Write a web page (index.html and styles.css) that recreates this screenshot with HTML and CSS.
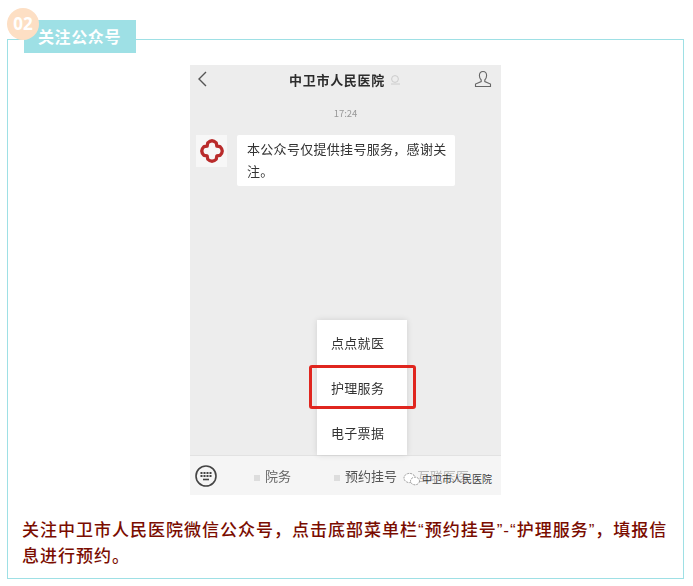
FILE: index.html
```html
<!DOCTYPE html>
<html lang="zh-CN">
<head>
    <meta charset="UTF-8">
    <meta name="viewport" content="width=device-width, initial-scale=1.0">
    <title>关注公众号</title>
    <link rel="stylesheet" href="styles.css">
</head>
<body>
    <div class="step">
        <div class="step-num">02</div>
        <div class="step-tag">关注公众号</div>
        <div class="step-box">
            <div class="phone">
                <div class="phone-top">
                    <svg class="back" width="12" height="18" viewBox="0 0 12 18"><path d="M10 2 L3 9 L10 16" fill="none" stroke="#555" stroke-width="1.4"/></svg>
                    <div class="phone-title">中卫市人民医院
                        <svg width="11" height="11" viewBox="0 0 11 11"><circle cx="5" cy="5" r="3.4" fill="none" stroke="#ccc"/><path d="M1 10h9" stroke="#ccc"/></svg>
                    </div>
                    <svg class="user" width="18" height="18" viewBox="0 0 18 18"><path d="M9 1.5c-2.4 0-3.6 1.8-3.6 4 0 2 .8 3.500 1.800 4.500v1.600L1.500 14v2.500h15V14l-5.700-2.400V10c1-1 1.800-2.500 1.800-4.500 0-2.200-1.200-4-3.600-4z" fill="none" stroke="#666" stroke-width="1.100"/></svg>
                </div>
                <div class="phone-time">17:24</div>
                <div class="msg">
                    <div class="avatar">
                        <svg width="28" height="28" viewBox="0 0 26 26"><path d="M9 5.500Q13 1.500 17 5.500L17.500 8.500L20.500 9Q24.500 13 20.500 17L17.500 17.500L17 20.500Q13 24.500 9 20.500L8.500 17.500L5.500 17Q1.500 13 5.500 9L8.500 8.500Z" fill="none" stroke="#b92b2b" stroke-width="3" stroke-linejoin="round"/></svg>
                    </div>
                    <div class="bubble">本公众号仅提供挂号服务，感谢关注。</div>
                </div>
                <div class="phone-space"></div>
                <div class="phone-bar">
                    <svg class="keys" width="24" height="24" viewBox="0 0 24 24"><circle cx="12" cy="12" r="10" fill="none" stroke="#444" stroke-width="1.600"/><path d="M6.500 9h11M6.500 12h11" stroke="#444" stroke-width="2" stroke-dasharray="2 1"/><path d="M9 15.500h6" stroke="#444" stroke-width="1.600"/></svg>
                    <div class="bar-item bar-first"><i></i>院务</div>
                    <div class="bar-item bar-second"><i></i>预约挂号</div>
                    <div class="bar-item bar-third">互联医医</div>
                </div>
                <div class="popup">
                    <div class="popup-item">点点就医</div>
                    <div class="popup-item">护理服务</div>
                    <div class="popup-item">电子票据</div>
                </div>
                <div class="popup-mark"></div>
            </div>
            <div class="mark">
                <svg width="18" height="14" viewBox="0 0 18 14"><ellipse cx="6.500" cy="6" rx="5.500" ry="4.600" fill="#fff" stroke="#999" stroke-dasharray="2 1"/><ellipse cx="12" cy="9" rx="4.500" ry="3.800" fill="#fff" stroke="#999" stroke-dasharray="2 1"/></svg>
                <span>中卫市人民医院</span>
            </div>
            <p class="step-text">关注中卫市人民医院微信公众号，点击底部菜单栏“预约挂号”-“护理服务”，填报信息进行预约。</p>
        </div>
    </div>
</body>
</html>
```

FILE: styles.css
```css
body {
    margin: 0;
    background: #fff;
    font-family: "Noto Sans CJK SC", "Liberation Sans", sans-serif;
    color: #333;
}
.step {
    position: relative;
    width: 677px;
    margin: 39px 0 0 7px;
}
.step-num {
    position: absolute;
    left: 0;
    top: -31px;
    z-index: 2;
    width: 32px;
    height: 32px;
    border-radius: 50%;
    background: #fddfc4;
    color: #fff;
    font-family: "Open Sans", sans-serif;
    font-size: 17px;
    font-weight: 700;
    line-height: 32px;
    text-align: center;
}
.step-tag {
    position: absolute;
    left: 17px;
    top: -19px;
    width: 112px;
    height: 33px;
    box-sizing: border-box;
    padding-left: 14px;
    background: #9ee0e5;
    color: #fff;
    font-size: 16px;
    font-weight: 700;
    line-height: 33px;
    letter-spacing: 0.6px;
}
.step-box {
    position: relative;
    height: 540px;
    box-sizing: border-box;
    padding: 25px 0 0 14px;
    border: 1px solid #9ee0e5;
}
.phone {
    position: relative;
    display: flex;
    flex-direction: column;
    width: 311px;
    height: 430px;
    margin-left: 168px;
    background: #ededed;
    filter: blur(0.4px);
}
.phone-top {
    display: flex;
    align-items: center;
    justify-content: space-between;
    height: 28px;
    padding: 0 9px 0 6px;
}
.phone-title {
    display: flex;
    align-items: center;
    gap: 5px;
    margin-left: 8px;
    color: #2c2c2c;
    font-size: 13px;
    font-weight: 700;
    letter-spacing: 0.7px;
}
.phone-time {
    margin-top: 13px;
    color: #999;
    font-size: 9.500px;
    line-height: 14px;
    text-align: center;
}
.msg {
    display: flex;
    align-items: flex-start;
    gap: 10px;
    margin: 15px 0 0 6px;
}
.avatar {
    display: flex;
    align-items: center;
    justify-content: center;
    flex: none;
    width: 31px;
    height: 32px;
    background: #f7f7f7;
}
.bubble {
    width: 200px;
    padding: 3px 8px 4px 10px;
    border-radius: 2px;
    background: #fff;
    color: #333;
    font-size: 13px;
    line-height: 22px;
    letter-spacing: 0.3px;
}
.phone-space {
    flex: 1;
}
.phone-bar {
    position: relative;
    display: flex;
    align-items: center;
    height: 40px;
    border-top: 1px solid #e2e2e2;
    background: #f5f5f5;
    color: #666;
    font-size: 13px;
    box-sizing: border-box;
}
.keys {
    margin-left: 4px;
}
.bar-item i {
    display: inline-block;
    width: 6px;
    height: 6px;
    margin-right: 5px;
    background: #ddd;
}
.bar-first {
    margin-left: 36px;
}
.bar-second {
    margin-left: 43px;
    color: #555;
}
.bar-third {
    margin-left: 20px;
    color: #bbb;
}
.popup {
    position: absolute;
    left: 127px;
    top: 255px;
    width: 90px;
    height: 135px;
    background: #fff;
    box-shadow: 0 0 6px rgba(0, 0, 0, 0.12);
}
.popup-item {
    height: 45px;
    padding-left: 14px;
    color: #333;
    font-size: 13px;
    line-height: 45px;
    letter-spacing: 0.3px;
}
.popup-mark {
    position: absolute;
    left: 119px;
    top: 300px;
    width: 107px;
    height: 44px;
    box-sizing: border-box;
    border: 3px solid #e0261f;
    border-radius: 3px;
}
.mark {
    position: absolute;
    left: 395px;
    top: 431px;
    display: flex;
    align-items: center;
    gap: 1px;
    color: #3a3a3a;
    font-size: 10px;
    text-shadow: 0 0 1px #fff;
}
.step-text {
    margin: 23px 0 0 0;
    width: 650px;
    color: #7a0c00;
    font-family: "Liberation Sans", "Noto Sans CJK SC", sans-serif;
    font-size: 17px;
    font-weight: 500;
    line-height: 26px;
    letter-spacing: 1px;
}
```
